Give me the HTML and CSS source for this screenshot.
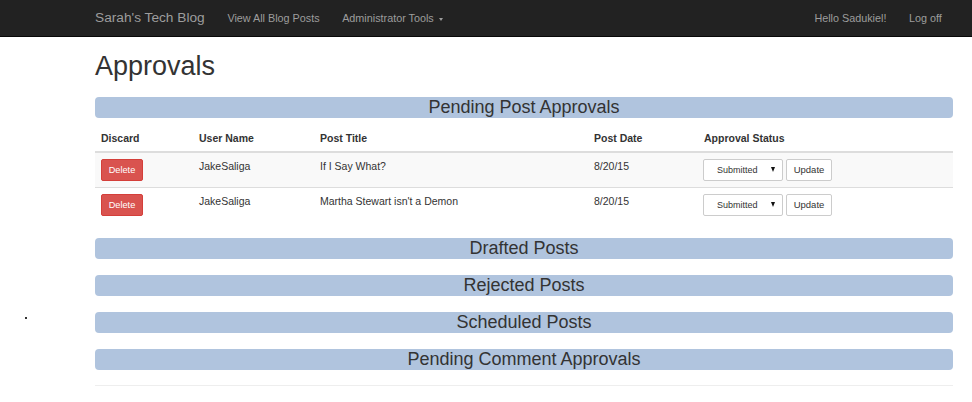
FILE: index.html
```html
<!DOCTYPE html>
<html>
<head>
<meta charset="utf-8">
<title>Approvals - Sarah's Tech Blog</title>
<link rel="stylesheet" href="styles.css">
</head>
<body>
<nav class="navbar">
  <div class="container nav-inner">
    <a class="brand" href="#">Sarah's Tech Blog</a>
    <ul class="nav">
      <li><a href="#">View All Blog Posts</a></li>
      <li><a href="#">Administrator Tools <span class="caret"></span></a></li>
    </ul>
    <ul class="nav nav-right">
      <li><a href="#">Hello Sadukiel!</a></li>
      <li><a href="#">Log off</a></li>
    </ul>
  </div>
</nav>

<main class="container">
  <h1 class="title">Approvals</h1>

  <section class="section">
    <h4 class="bar">Pending Post Approvals</h4>
    <table class="table">
      <colgroup>
        <col class="c-discard"><col class="c-user"><col class="c-title"><col class="c-date"><col class="c-status">
      </colgroup>
      <thead>
        <tr><th>Discard</th><th>User Name</th><th>Post Title</th><th>Post Date</th><th>Approval Status</th></tr>
      </thead>
      <tbody>
        <tr class="odd">
          <td><button class="btn btn-danger">Delete</button></td>
          <td>JakeSaliga</td>
          <td>If I Say What?</td>
          <td>8/20/15</td>
          <td><div class="status"><span class="select"><span>Submitted</span><span class="arrow"></span></span><button class="btn btn-default">Update</button></div></td>
        </tr>
        <tr>
          <td><button class="btn btn-danger">Delete</button></td>
          <td>JakeSaliga</td>
          <td>Martha Stewart isn't a Demon</td>
          <td>8/20/15</td>
          <td><div class="status"><span class="select"><span>Submitted</span><span class="arrow"></span></span><button class="btn btn-default">Update</button></div></td>
        </tr>
      </tbody>
    </table>
  </section>

  <h4 class="bar bar-gap">Drafted Posts</h4>
  <h4 class="bar bar-gap">Rejected Posts</h4>
  <h4 class="bar bar-gap">Scheduled Posts</h4>
  <h4 class="bar">Pending Comment Approvals</h4>
  <hr class="rule">
</main>
<span class="speck"></span>
</body>
</html>
```
FILE: styles.css
```css
* { box-sizing: border-box; }

body {
  margin: 0;
  font-family: "Liberation Sans", Arial, Helvetica, sans-serif;
  font-size: 10.5px;
  line-height: 15px;
  color: #333;
  background: #fff;
  position: relative;
}

.container {
  margin-left: 95px;
  width: 858px;
}

.navbar {
  height: 37px;
  background: #222;
  border-bottom: 1px solid #080808;
}

.nav-inner {
  display: flex;
  align-items: stretch;
  height: 36px;
}

.brand {
  font-size: 13.7px;
  line-height: 36px;
  color: #9d9d9d;
  text-decoration: none;
  padding-right: 11.5px;
}

.nav {
  list-style: none;
  margin: 0;
  padding: 0;
  display: flex;
}

.nav a {
  display: block;
  padding: 0 11.25px;
  line-height: 36px;
  color: #9d9d9d;
  text-decoration: none;
  font-size: 10.8px;
}

.nav-right {
  margin-left: auto;
}

.caret {
  display: inline-block;
  width: 0;
  height: 0;
  margin-left: 2px;
  vertical-align: middle;
  border-top: 3px solid #9d9d9d;
  border-left: 2.5px solid transparent;
  border-right: 2.5px solid transparent;
}

.title {
  font-size: 27px;
  font-weight: 400;
  line-height: 30px;
  margin: 14px 0 16px;
  color: #333;
}

.bar {
  margin: 0;
  height: 21px;
  line-height: 21px;
  font-size: 18px;
  font-weight: 400;
  text-align: center;
  background: #b0c4de;
  border-radius: 4px;
  color: #333;
}

.bar-gap { margin-bottom: 16px; }

.section .bar { margin-bottom: 7px; }

.table {
  width: 858px;
  border-collapse: collapse;
  margin-bottom: 16px;
  table-layout: fixed;
}

.c-discard { width: 98px; }
.c-user { width: 121px; }
.c-title { width: 274px; }
.c-date { width: 110px; }
.c-status { width: 255px; }

.table th {
  text-align: left;
  font-weight: 700;
  padding: 6px 6px 5px;
  border-bottom: 2px solid #ddd;
  vertical-align: bottom;
}

.table td {
  padding: 6px;
  vertical-align: top;
  border-top: 1px solid #ddd;
}

.table tbody tr:first-child td { border-top: 0; }

.odd td { background: #f9f9f9; }

.btn {
  display: inline-block;
  height: 22px;
  font-family: inherit;
  font-size: 9.2px;
  line-height: 20px;
  padding: 0 6px;
  border-radius: 2px;
  border: 1px solid transparent;
  cursor: pointer;
  vertical-align: top;
}

.btn-danger {
  width: 42px;
  color: #fff;
  background: #d9534f;
  border-color: #d43f3a;
}

.btn-default {
  width: 46px;
  color: #333;
  background: #fff;
  border-color: #ccc;
  font-size: 9.5px;
}

.status {
  display: flex;
  gap: 3px;
  margin-left: -1px;
}

.select {
  display: inline-flex;
  align-items: center;
  justify-content: space-between;
  width: 80px;
  height: 22px;
  padding: 0 7px 0 13px;
  font-size: 9px;
  border: 1px solid #ccc;
  border-radius: 2px;
  background: #fff;
  color: #333;
}

.arrow {
  width: 0;
  height: 0;
  border-top: 5px solid #111;
  border-left: 2.5px solid transparent;
  border-right: 2.5px solid transparent;
  margin-top: -2px;
}

.rule {
  margin: 15px 0 0;
  border: 0;
  border-top: 1px solid #eee;
}

.speck {
  position: absolute;
  left: 25px;
  top: 317px;
  width: 2px;
  height: 2px;
  background: #333;
}
```
